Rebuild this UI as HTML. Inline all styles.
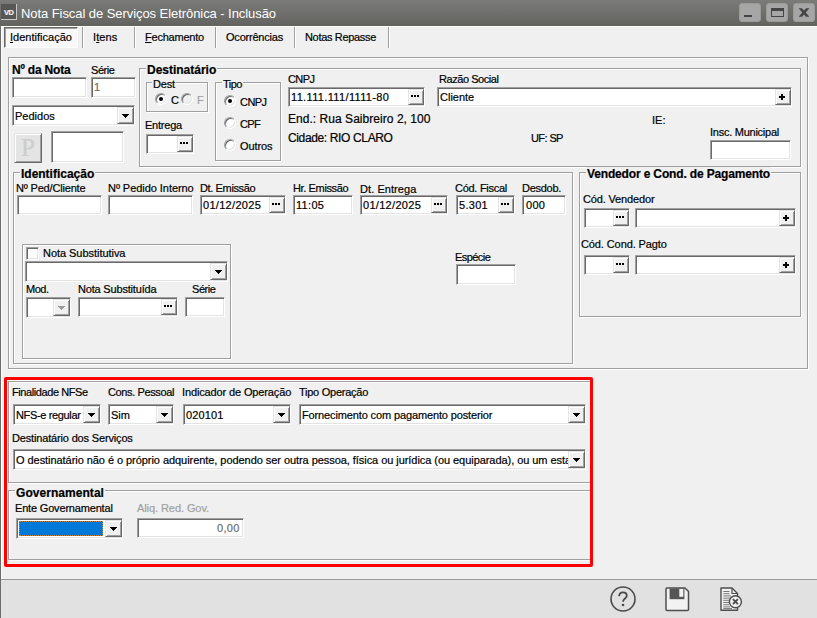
<!DOCTYPE html><html><head><meta charset="utf-8"><title>Nota Fiscal de Serviços Eletrônica - Inclusão</title><style>
html,body{margin:0;padding:0;}
body{width:817px;height:618px;overflow:hidden;background:#f0f0f0;position:relative;font-family:"Liberation Sans",sans-serif;font-size:11px;color:#000;-webkit-text-stroke-width:0.2px;}
div,span,i{position:absolute;box-sizing:border-box;}
.t{white-space:nowrap;line-height:13px;font-size:11px;letter-spacing:-0.12px;}
.tb{white-space:nowrap;line-height:14px;font-size:12px;font-weight:bold;letter-spacing:-0.12px;}
.t12{white-space:nowrap;line-height:14px;font-size:12px;}
.lg{background:#f0f0f0;padding:0 1px;}
.inp{background:#fff;border:1px solid;border-color:#a0a0a0 #fff #fff #a0a0a0;box-shadow:inset 1px 1px 0 #696969,inset -1px -1px 0 #e3e3e3;overflow:hidden;}
.it{left:2px;top:3px;white-space:nowrap;line-height:13px;font-size:11px;}
.btn{background:#f0f0f0;border:1px solid;border-color:#e3e3e3 #696969 #696969 #e3e3e3;box-shadow:inset 1px 1px 0 #fff,inset -1px -1px 0 #a0a0a0;}
.grp{border:1px solid #a0a0a0;box-shadow:1px 1px 0 #fff,inset 1px 1px 0 #fff;}
.d3{left:2px;top:5px;width:2px;height:2px;background:#000;box-shadow:3px 0 0 #000,6px 0 0 #000;}
.ph{left:3px;top:6px;width:6px;height:2px;background:#000;}
.pv{left:5px;top:4px;width:2px;height:6px;background:#000;}
.ar{position:absolute;left:4px;top:6px;}
.radio{width:12px;height:12px;border-radius:50%;background:#fff;border:1px solid;border-color:#a0a0a0 #fff #fff #a0a0a0;box-shadow:inset 1px 1px 0 #696969,inset -1px -1px 0 #e3e3e3;}
.radio.on::after{content:"";position:absolute;left:3px;top:3px;width:4px;height:4px;border-radius:50%;background:#000;}
.radio.dis{background:#f0f0f0;}
.sepv{width:2px;border-left:1px solid #a0a0a0;border-right:1px solid #fff;}
</style></head><body>
<div style="left:0;top:0;width:817px;height:26px;background:linear-gradient(#7b7b79,#62625f);"></div>
<div style="left:1px;top:26px;width:816px;height:1px;background:#fdfdfd;"></div><div style="left:1px;top:27px;width:1px;height:591px;background:#fdfdfd;"></div>
<div style="left:0;top:25px;width:1px;height:593px;background:#6b6b69;"></div>
<div style="left:1px;top:4px;width:16px;height:16px;background:#575755;border:1px solid #c8c8c8;border-top:0;border-left:0;"><span style="left:3px;top:4.5px;font-size:7.5px;line-height:8px;font-weight:bold;color:#f4f4f4;letter-spacing:-0.5px;">VD</span></div>
<span class="t" style="left:21px;top:5px;font-size:13px;line-height:17px;color:#fff;-webkit-text-stroke-width:0;letter-spacing:-0.066px;">Nota Fiscal de Serviços Eletrônica - Inclusão</span>
<div style="left:739px;top:3px;width:22px;height:19px;background:#a6a6a6;border:1px solid #9a9a98;border-radius:3px;"></div>
<div style="left:766px;top:3px;width:22px;height:19px;background:#a6a6a6;border:1px solid #9a9a98;border-radius:3px;"></div>
<div style="left:793px;top:3px;width:22px;height:19px;background:#a6a6a6;border:1px solid #9a9a98;border-radius:3px;"></div>
<div style="left:744px;top:15px;width:8px;height:2px;background:#444;"></div>
<div style="left:771px;top:8px;width:13px;height:9px;border:1px solid #444;border-top-width:3px;"></div>
<svg style="position:absolute;left:798px;top:7px" width="12" height="11" viewBox="0 0 12 11"><path d="M0.6 1.2 H4 L11.4 9.8 H8 Z" fill="#444"/><path d="M11.4 1.2 H8 L0.6 9.8 H4 Z" fill="#444"/></svg>
<div style="left:4px;top:27px;width:74px;height:21px;background:#f8f8f8;border:1px solid;border-color:#696969 #fff #fff #696969;box-shadow:inset 1px 1px 0 #a0a0a0;"></div>
<span class="t" style="left:10px;top:31px;letter-spacing:0.017px;"><u>I</u>dentificação</span>
<span class="t" style="left:93px;top:31px;letter-spacing:0.105px;">I<u>t</u>ens</span>
<span class="t" style="left:145px;top:31px;letter-spacing:-0.217px;"><u>F</u>echamento</span>
<span class="t" style="left:226px;top:31px;letter-spacing:-0.209px;">Ocorrências</span>
<span class="t" style="left:305px;top:31px;letter-spacing:-0.325px;">Notas Repasse</span>
<div class="sepv" style="left:82px;top:27px;width:2px;height:21px;"></div>
<div class="sepv" style="left:134px;top:27px;width:2px;height:21px;"></div>
<div class="sepv" style="left:215px;top:27px;width:2px;height:21px;"></div>
<div class="sepv" style="left:294px;top:27px;width:2px;height:21px;"></div>
<div class="sepv" style="left:388px;top:27px;width:2px;height:21px;"></div>
<div class="grp" style="left:8px;top:57px;width:800px;height:312px;"></div>
<span class="tb" style="left:12px;top:63px;letter-spacing:-0.189px;">Nº da Nota</span>
<div class="inp" style="left:12px;top:77px;width:75px;height:21px;"></div>
<span class="t" style="left:91px;top:64px;letter-spacing:-0.438px;">Série</span>
<div class="inp" style="left:91px;top:77px;width:45px;height:21px;"><span class="it" style="color:#6d6d6d;">1</span></div>
<div class="inp" style="left:12px;top:105px;width:123px;height:21px;"><span class="it" style="top:4px;">Pedidos</span></div>
<div class="btn" style="left:117px;top:107px;width:17px;height:17px;"><svg class="ar" width="7" height="4" viewBox="0 0 7 4" shape-rendering="crispEdges"><path fill="#000" d="M0 0h7v1h-7z M1 1h5v1h-5z M2 2h3v1h-3z M3 3h1v1h-1z"/></svg></div>
<div class="btn" style="left:14px;top:133px;width:28px;height:30px;background:#e4e4e4;"><span style="left:6px;top:1px;font-family:'Liberation Serif',serif;font-size:25px;line-height:26px;color:#cdcdcd;">P</span></div>
<div class="inp" style="left:51px;top:131px;width:73px;height:32px;"></div>
<div class="grp" style="left:139px;top:68px;width:662px;height:99px;"></div>
<span class="tb lg" style="left:146px;top:63px;letter-spacing:-0.013px;">Destinatário</span>
<div class="grp" style="left:146px;top:82px;width:62px;height:30px;"></div>
<span class="t lg" style="left:152px;top:77.5px;letter-spacing:-0.206px;">Dest</span>
<div class="radio on" style="left:155px;top:93px"></div>
<span class="t" style="left:171px;top:94px;">C</span>
<div class="radio dis" style="left:181px;top:93px"></div>
<span class="t" style="left:197px;top:94px;color:#a0a0a0;">F</span>
<span class="t" style="left:145px;top:119px;letter-spacing:-0.219px;">Entrega</span>
<div class="inp" style="left:146px;top:134px;width:48px;height:20px;"></div>
<div class="btn" style="left:177px;top:136px;width:16px;height:16px;"><i class="d3"></i></div>
<div class="grp" style="left:215px;top:82px;width:66px;height:79px;"></div>
<span class="t lg" style="left:222px;top:77.5px;letter-spacing:-0.500px;">Tipo</span>
<div class="radio on" style="left:224px;top:95px"></div>
<span class="t" style="left:240px;top:96px;letter-spacing:-0.559px;">CNPJ</span>
<div class="radio" style="left:224px;top:117px"></div>
<span class="t" style="left:240px;top:117.5px;letter-spacing:-0.600px;">CPF</span>
<div class="radio" style="left:224px;top:139px"></div>
<span class="t" style="left:240px;top:139.5px;letter-spacing:-0.086px;">Outros</span>
<span class="t" style="left:288px;top:73px;letter-spacing:-0.600px;">CNPJ</span>
<div class="inp" style="left:288px;top:87px;width:137px;height:20px;"><span class="it" style="letter-spacing:0.35px;">11.111.111/1111-80</span></div>
<div class="btn" style="left:408px;top:89px;width:16px;height:16px;"><i class="d3"></i></div>
<span class="t12" style="left:288px;top:112px;letter-spacing:0.041px;">End.: Rua Saibreiro 2, 100</span>
<span class="t12" style="left:288px;top:131px;letter-spacing:-0.360px;">Cidade: RIO CLARO</span>
<span class="t" style="left:439px;top:73px;letter-spacing:-0.444px;">Razão Social</span>
<div class="inp" style="left:437px;top:87px;width:355px;height:20px;"><span class="it" style="">Cliente</span></div>
<div class="btn" style="left:775px;top:89px;width:16px;height:16px;"><i class="ph"></i><i class="pv"></i></div>
<span class="t" style="left:531px;top:132px;letter-spacing:-0.600px;">UF: SP</span>
<span class="t" style="left:652px;top:114px;letter-spacing:0.016px;">IE:</span>
<span class="t" style="left:710px;top:126px;letter-spacing:-0.251px;">Insc. Municipal</span>
<div class="inp" style="left:710px;top:140px;width:81px;height:20px;"></div>
<div class="grp" style="left:13px;top:172px;width:560px;height:192px;"></div>
<span class="tb lg" style="left:20px;top:167px;letter-spacing:-0.012px;">Identificação</span>
<span class="t" style="left:16px;top:182px;letter-spacing:-0.178px;">Nº Ped/Cliente</span>
<div class="inp" style="left:17px;top:195px;width:85px;height:20px;"></div>
<span class="t" style="left:108px;top:182px;letter-spacing:-0.052px;">Nº Pedido Interno</span>
<div class="inp" style="left:108px;top:195px;width:85px;height:20px;"></div>
<span class="t" style="left:200px;top:182px;letter-spacing:-0.372px;">Dt. Emissão</span>
<div class="inp" style="left:200px;top:195px;width:86px;height:20px;"><span class="it" style="letter-spacing:0.3px;">01/12/2025</span></div>
<div class="btn" style="left:269px;top:197px;width:16px;height:16px;"><i class="d3"></i></div>
<span class="t" style="left:293px;top:182px;letter-spacing:-0.372px;">Hr. Emissão</span>
<div class="inp" style="left:293px;top:195px;width:60px;height:20px;"><span class="it" style="letter-spacing:0.3px;">11:05</span></div>
<span class="t" style="left:360px;top:183px;letter-spacing:0.069px;">Dt. Entrega</span>
<div class="inp" style="left:360px;top:195px;width:88px;height:20px;"><span class="it" style="letter-spacing:0.3px;">01/12/2025</span></div>
<div class="btn" style="left:431px;top:197px;width:16px;height:16px;"><i class="d3"></i></div>
<span class="t" style="left:455px;top:182px;letter-spacing:-0.276px;">Cód. Fiscal</span>
<div class="inp" style="left:456px;top:195px;width:59px;height:20px;"><span class="it" style="letter-spacing:0.3px;">5.301</span></div>
<div class="btn" style="left:498px;top:197px;width:16px;height:16px;"><i class="d3"></i></div>
<span class="t" style="left:522px;top:182px;letter-spacing:-0.269px;">Desdob.</span>
<div class="inp" style="left:522px;top:195px;width:44px;height:20px;"><span class="it" style="letter-spacing:0.3px;left:3px;">000</span></div>
<span class="t" style="left:455px;top:251px;letter-spacing:-0.563px;">Espécie</span>
<div class="inp" style="left:456px;top:264px;width:60px;height:21px;"></div>
<div class="grp" style="left:22px;top:244px;width:209px;height:115px;"></div>
<div class="inp" style="left:26px;top:247px;width:13px;height:13px;"></div>
<span class="t" style="left:43px;top:247px;letter-spacing:-0.044px;">Nota Substitutiva</span>
<div class="inp" style="left:25px;top:261px;width:203px;height:21px;"></div>
<div class="btn" style="left:210px;top:263px;width:17px;height:17px;"><svg class="ar" width="7" height="4" viewBox="0 0 7 4" shape-rendering="crispEdges"><path fill="#000" d="M0 0h7v1h-7z M1 1h5v1h-5z M2 2h3v1h-3z M3 3h1v1h-1z"/></svg></div>
<span class="t" style="left:26px;top:283px;letter-spacing:-0.467px;">Mod.</span>
<div class="inp" style="left:26px;top:297px;width:45px;height:21px;"></div>
<div class="btn" style="left:53px;top:299px;width:17px;height:17px;"><svg class="ar" width="7" height="4" viewBox="0 0 7 4" shape-rendering="crispEdges"><path fill="#999" d="M0 0h7v1h-7z M1 1h5v1h-5z M2 2h3v1h-3z M3 3h1v1h-1z"/></svg></div>
<span class="t" style="left:78px;top:283px;letter-spacing:-0.184px;">Nota Substituída</span>
<div class="inp" style="left:78px;top:297px;width:100px;height:20px;"></div>
<div class="btn" style="left:161px;top:299px;width:16px;height:16px;"><i class="d3"></i></div>
<span class="t" style="left:192px;top:283px;letter-spacing:-0.438px;">Série</span>
<div class="inp" style="left:185px;top:297px;width:40px;height:20px;"></div>
<div class="grp" style="left:579px;top:172px;width:222px;height:145px;"></div>
<span class="tb lg" style="left:586px;top:167px;letter-spacing:-0.151px;">Vendedor e Cond. de Pagamento</span>
<span class="t" style="left:583px;top:193px;letter-spacing:-0.153px;">Cód. Vendedor</span>
<div class="inp" style="left:584px;top:208px;width:46px;height:20px;"></div>
<div class="btn" style="left:613px;top:210px;width:16px;height:16px;"><i class="d3"></i></div>
<div class="inp" style="left:635px;top:208px;width:161px;height:20px;"></div>
<div class="btn" style="left:779px;top:210px;width:16px;height:16px;"><i class="ph"></i><i class="pv"></i></div>
<span class="t" style="left:581px;top:238px;letter-spacing:-0.103px;">Cód. Cond. Pagto</span>
<div class="inp" style="left:584px;top:255px;width:46px;height:20px;"></div>
<div class="btn" style="left:613px;top:257px;width:16px;height:16px;"><i class="d3"></i></div>
<div class="inp" style="left:635px;top:255px;width:161px;height:20px;"></div>
<div class="btn" style="left:779px;top:257px;width:16px;height:16px;"><i class="ph"></i><i class="pv"></i></div>
<div style="left:7px;top:380px;width:583px;height:1px;background:#fff;"></div>
<div class="grp" style="left:8px;top:381px;width:584px;height:102px;"></div>
<span class="t" style="left:12px;top:386px;letter-spacing:-0.416px;">Finalidade NFSe</span>
<div class="inp" style="left:13px;top:404px;width:88px;height:21px;"><span class="it" style="top:4px;letter-spacing:-0.35px;">NFS-e regular</span></div>
<div class="btn" style="left:83px;top:406px;width:17px;height:17px;"><svg class="ar" width="7" height="4" viewBox="0 0 7 4" shape-rendering="crispEdges"><path fill="#000" d="M0 0h7v1h-7z M1 1h5v1h-5z M2 2h3v1h-3z M3 3h1v1h-1z"/></svg></div>
<span class="t" style="left:108px;top:386px;letter-spacing:-0.380px;">Cons. Pessoal</span>
<div class="inp" style="left:108px;top:404px;width:66px;height:21px;"><span class="it" style="top:4px;">Sim</span></div>
<div class="btn" style="left:156px;top:406px;width:17px;height:17px;"><svg class="ar" width="7" height="4" viewBox="0 0 7 4" shape-rendering="crispEdges"><path fill="#000" d="M0 0h7v1h-7z M1 1h5v1h-5z M2 2h3v1h-3z M3 3h1v1h-1z"/></svg></div>
<span class="t" style="left:182px;top:386px;letter-spacing:-0.130px;">Indicador de Operação</span>
<div class="inp" style="left:183px;top:404px;width:108px;height:21px;"><span class="it" style="top:4px;letter-spacing:0.15px;">020101</span></div>
<div class="btn" style="left:273px;top:406px;width:17px;height:17px;"><svg class="ar" width="7" height="4" viewBox="0 0 7 4" shape-rendering="crispEdges"><path fill="#000" d="M0 0h7v1h-7z M1 1h5v1h-5z M2 2h3v1h-3z M3 3h1v1h-1z"/></svg></div>
<span class="t" style="left:299px;top:386px;letter-spacing:-0.258px;">Tipo Operação</span>
<div class="inp" style="left:299px;top:404px;width:287px;height:21px;"><span class="it" style="top:4px;letter-spacing:-0.13px;">Fornecimento com pagamento posterior</span></div>
<div class="btn" style="left:568px;top:406px;width:17px;height:17px;"><svg class="ar" width="7" height="4" viewBox="0 0 7 4" shape-rendering="crispEdges"><path fill="#000" d="M0 0h7v1h-7z M1 1h5v1h-5z M2 2h3v1h-3z M3 3h1v1h-1z"/></svg></div>
<span class="t" style="left:12px;top:432px;letter-spacing:-0.161px;">Destinatário dos Serviços</span>
<div class="inp" style="left:13px;top:449px;width:573px;height:21px;"><span class="it" style="top:4px;letter-spacing:-0.055px;">O destinatário não é o próprio adquirente, podendo ser outra pessoa, física ou jurídica (ou equiparada), ou um esta</span></div>
<div class="btn" style="left:568px;top:451px;width:17px;height:17px;"><svg class="ar" width="7" height="4" viewBox="0 0 7 4" shape-rendering="crispEdges"><path fill="#000" d="M0 0h7v1h-7z M1 1h5v1h-5z M2 2h3v1h-3z M3 3h1v1h-1z"/></svg></div>
<div class="grp" style="left:8px;top:490px;width:584px;height:70px;"></div>
<span class="tb lg" style="left:15px;top:485.5px;letter-spacing:0.048px;">Governamental</span>
<span class="t" style="left:15px;top:502px;letter-spacing:-0.177px;">Ente Governamental</span>
<div class="inp" style="left:16px;top:518px;width:107px;height:21px;"></div>
<div class="btn" style="left:105px;top:520px;width:17px;height:17px;"><svg class="ar" width="7" height="4" viewBox="0 0 7 4" shape-rendering="crispEdges"><path fill="#000" d="M0 0h7v1h-7z M1 1h5v1h-5z M2 2h3v1h-3z M3 3h1v1h-1z"/></svg></div>
<div style="left:19px;top:521px;width:84px;height:15px;background:#0078d7;outline:1px dotted #c08040;outline-offset:-1px;"></div>
<span class="t" style="left:137px;top:502px;color:#a0a0a0;letter-spacing:-0.078px;">Aliq. Red. Gov.</span>
<div class="inp" style="left:137px;top:518px;width:107px;height:20px;"></div>
<span class="t" style="left:217px;top:522px;color:#6d6d6d;letter-spacing:0.3px;">0,00</span>
<div style="left:4px;top:377px;width:589px;height:190px;border:3px solid #fe0000;border-radius:2px;"></div>
<div style="left:1px;top:579px;width:816px;height:39px;background:#e1e1e1;border-top:1px solid #999;"></div>
<svg style="position:absolute;left:609px;top:585px" width="28" height="28" viewBox="0 0 28 28"><circle cx="14" cy="14" r="12" fill="none" stroke="#4a4a4a" stroke-width="1.6"/><path d="M10.2 11.2 C10.2 8.6 12 7.4 14 7.4 C16.2 7.4 17.8 8.8 17.8 10.8 C17.8 13.6 14 13.6 14 16.8" fill="none" stroke="#4a4a4a" stroke-width="1.8"/><circle cx="14" cy="20" r="1.3" fill="#4a4a4a"/></svg>
<svg style="position:absolute;left:664px;top:586px" width="27" height="27" viewBox="0 0 27 27"><path d="M3 2 H21 L24.5 5.5 V23.5 Q24.5 24.5 23.5 24.5 H3 Q2 24.5 2 23.5 V3 Q2 2 3 2 Z" fill="#f2f2f2" stroke="#4d4d4d" stroke-width="1.5" stroke-linejoin="round"/><rect x="5.6" y="2.5" width="14.8" height="10.7" fill="#555"/><rect x="15.3" y="3" width="4" height="7.8" fill="#f2f2f2"/></svg>
<svg style="position:absolute;left:719px;top:586px" width="26" height="27" viewBox="0 0 26 27"><path d="M2 2 H13 L18.5 7.5 V24.3 H2 Z" fill="#f2f2f2" stroke="#4d4d4d" stroke-width="1.4" stroke-linejoin="round"/><path d="M13 2 V7.5 H18.5" fill="none" stroke="#4d4d4d" stroke-width="1.2"/><path d="M4.3 5.5H10.5 M4.3 7.7H10.5 M4.3 9.9H12 M4.3 12.1H12 M4.3 14.3H11 M4.3 16.5H10 M4.3 18.7H10 M4.3 20.9H11 M4.3 22.6H13" stroke="#6a6a6a" stroke-width="0.9"/><circle cx="16.4" cy="15.7" r="6" fill="#f2f2f2" stroke="#4d4d4d" stroke-width="1.4"/><path d="M13.9 13.2 L18.9 18.2 M18.9 13.2 L13.9 18.2" stroke="#4d4d4d" stroke-width="1.9"/></svg>
</body></html>
